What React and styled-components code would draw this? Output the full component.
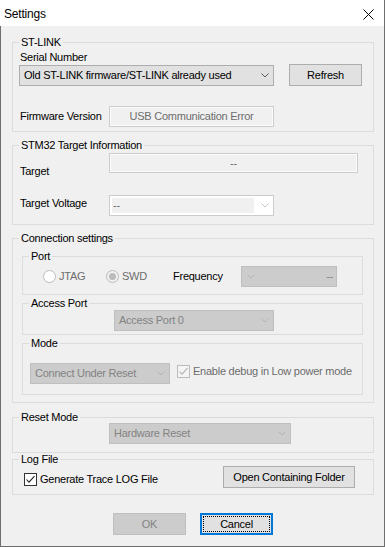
import React from 'react';
import styled, { createGlobalStyle } from 'styled-components';

const GlobalStyle = createGlobalStyle`
  * { box-sizing: border-box; }
  html, body { margin: 0; padding: 0; background: #f0f0f0; }
  body {
    font-family: "Liberation Sans", Arial, sans-serif;
    font-size: 11px;
    line-height: 13px;
    letter-spacing: -0.25px;
    color: #000;
  }
  #root { width: 385px; height: 547px; }
`;

const Window = styled.div`
  width: 385px;
  height: 547px;
  display: flex;
  flex-direction: column;
  background: #f0f0f0;
  border-right: 1px solid #6f6f6f;
  border-bottom: 1px solid #6f6f6f;
`;

const TitleBar = styled.div`
  flex: none;
  height: 26px;
  background: #fff;
  display: flex;
  align-items: center;
  justify-content: space-between;
  padding: 0 10px 0 4px;
`;

const Title = styled.span`
  font-size: 12px;
  line-height: 14px;
  letter-spacing: -0.2px;
  margin-top: 2px;
`;

const CloseIcon = styled.svg`
  display: block;
  margin-top: 3px;
`;

const Body = styled.div`
  flex: 1;
  display: flex;
  flex-direction: column;
  border-left: 1px solid #6f6f6f;
  padding: 0 10px 0 11px;
`;

const Group = styled.fieldset`
  flex: none;
  min-width: 0;
  margin: ${p => p.$mt || 0}px 0 0 ${p => p.$ml || 0}px;
  width: ${p => (p.$w ? `${p.$w}px` : 'auto')};
  height: ${p => p.$h}px;
  padding: 0;
  border: 1px solid #dcdcdc;
`;

const Legend = styled.legend`
  margin-left: 6px;
  padding: 0 2px;
  line-height: 13px;
  white-space: nowrap;
`;

const Section = styled.div`
  padding: ${p => p.$pt || 0}px ${p => p.$pr || 0}px 0 ${p => p.$pl || 0}px;
`;

const Row = styled.div`
  display: flex;
  align-items: ${p => p.$align || 'center'};
  justify-content: ${p => p.$justify || 'flex-start'};
  margin-top: ${p => p.$mt || 0}px;
  padding-left: ${p => p.$pl || 0}px;
  padding-right: ${p => p.$pr || 0}px;
`;

const FieldLabel = styled.span`
  flex: none;
  width: ${p => (p.$w ? `${p.$w}px` : 'auto')};
  margin-top: ${p => p.$mt || 0}px;
  padding-left: 1px;
  white-space: nowrap;
  color: #000;
`;

const Combo = styled.div`
  flex: none;
  width: ${p => p.$w}px;
  height: 21px;
  margin: ${p => p.$mt || 0}px 0 0 ${p => p.$ml || 0}px;
  display: flex;
  flex-direction: ${p => (p.$rtl ? 'row-reverse' : 'row')};
  align-items: center;
  justify-content: space-between;
  padding: ${p => (p.$rtl ? '0 3px 0 5px' : '0 4px 0 4px')};
  border: 1px solid ${p => (p.$disabled ? '#bfbfbf' : '#adadad')};
  background: ${p => (p.$disabled ? '#cccccc' : '#e1e1e1')};
  color: ${p => (p.$disabled ? '#838383' : '#000')};
  white-space: nowrap;
`;

const EditCombo = styled.div`
  flex: none;
  width: ${p => p.$w}px;
  height: 21px;
  display: flex;
  align-items: stretch;
  padding: 2px 0 2px 2px;
  border: 1px solid #cccccc;
  background: #fff;
`;

const EditField = styled.div`
  flex: 1;
  display: flex;
  align-items: center;
  padding-left: 1px;
  background: #f0f0f0;
  color: #6d6d6d;
`;

const DropZone = styled.div`
  flex: none;
  width: 19px;
  display: flex;
  align-items: center;
  justify-content: flex-end;
  padding-right: 4px;
`;

const ReadOnlyBox = styled.div`
  flex: none;
  width: ${p => p.$w}px;
  height: ${p => p.$h}px;
  display: flex;
  align-items: center;
  justify-content: center;
  border: 1px solid #cccccc;
  box-shadow: inset 0 0 0 1px #fbfbfb;
  background: #f0f0f0;
  color: #6d6d6d;
  white-space: nowrap;
`;

const Button = styled.button`
  flex: none;
  width: ${p => p.$w}px;
  height: 22px;
  margin-left: ${p => p.$ml || 0}px;
  padding: 0;
  font: inherit;
  letter-spacing: inherit;
  line-height: 13px;
  color: #000;
  background: #e1e1e1;
  border: 1px solid #adadad;
  border-radius: 0;
  white-space: nowrap;
  &:disabled {
    color: #838383;
    background: #cccccc;
    border-color: #bfbfbf;
  }
  ${p =>
    p.$default &&
    `
    border: 2px solid #0078d7;
    outline: 1px dotted #000;
    outline-offset: -4px;
  `}
`;

const ButtonBar = styled.div`
  display: flex;
  justify-content: center;
  gap: 14px;
  margin-top: 18px;
`;

const PortGrid = styled.div`
  display: grid;
  grid-template-columns: 63px 66px 69px 96px;
  align-items: center;
  height: 21px;
  margin-top: 3px;
  padding-left: 20px;
`;

const RadioItem = styled.label`
  display: flex;
  align-items: center;
  gap: 3px;
  color: #6d6d6d;
`;

const RadioCircle = styled.span`
  flex: none;
  width: 13px;
  height: 13px;
  border-radius: 50%;
  border: 1px solid #bcbcbc;
  background: ${p => (p.$checked ? '#f0f0f0' : '#fff')};
  display: flex;
  align-items: center;
  justify-content: center;
  &::after {
    content: '';
    display: ${p => (p.$checked ? 'block' : 'none')};
    width: 7px;
    height: 7px;
    border-radius: 50%;
    background: #bcbcbc;
  }
`;

const CheckItem = styled.label`
  flex: none;
  display: flex;
  align-items: center;
  gap: 3px;
  margin: ${p => p.$mt || 0}px 0 0 ${p => p.$ml || 0}px;
  color: ${p => (p.$disabled ? '#6d6d6d' : '#000')};
  white-space: nowrap;
`;

const CheckBox = styled.span`
  flex: none;
  width: 13px;
  height: 13px;
  display: flex;
  align-items: center;
  justify-content: center;
  border: 1px solid ${p => (p.$disabled ? '#bcbcbc' : '#333333')};
  background: ${p => (p.$disabled ? '#f4f4f4' : '#fff')};
`;

const IconSvg = styled.svg`
  flex: none;
  display: block;
`;

const Chevron = ({ color = '#606060' }) => (
  <IconSvg width="8" height="5" viewBox="0 0 8 5">
    <polyline points="0.5,0.5 4,4 7.5,0.5" fill="none" stroke={color} strokeWidth="1" />
  </IconSvg>
);

const Check = ({ color }) => (
  <IconSvg width="11" height="11" viewBox="0 0 11 11">
    <polyline points="1.5,5.5 4,8.2 9.5,2.2" fill="none" stroke={color} strokeWidth="1.1" />
  </IconSvg>
);

export default function App() {
  return (
    <>
      <GlobalStyle />
      <Window>
        <TitleBar>
          <Title>Settings</Title>
          <CloseIcon width="11" height="11" viewBox="0 0 11 11">
            <line x1="0.5" y1="0.5" x2="10.5" y2="10.5" stroke="#000" strokeWidth="1" />
            <line x1="10.5" y1="0.5" x2="0.5" y2="10.5" stroke="#000" strokeWidth="1" />
          </CloseIcon>
        </TitleBar>
        <Body>
          <Group $mt={10} $h={96}>
            <Legend>ST-LINK</Legend>
            <Section $pt={2} $pl={6}>
              <FieldLabel>Serial Number</FieldLabel>
              <Row $align="flex-start">
                <Combo $w={255} $mt={1}>
                  <span>Old ST-LINK firmware/ST-LINK already used</span>
                  <Chevron color="#5a5a5a" />
                </Combo>
                <Button $w={73} $ml={15}>Refresh</Button>
              </Row>
              <Row $mt={20}>
                <FieldLabel $w={90}>Firmware Version</FieldLabel>
                <ReadOnlyBox $w={165} $h={21}>USB Communication Error</ReadOnlyBox>
              </Row>
            </Section>
          </Group>

          <Group $mt={7} $h={86}>
            <Legend>STM32 Target Information</Legend>
            <Section $pt={1} $pl={6}>
              <Row $align="flex-start">
                <FieldLabel $w={90} $mt={12}>Target</FieldLabel>
                <ReadOnlyBox $w={249} $h={20}>--</ReadOnlyBox>
              </Row>
              <Row $align="flex-start" $mt={17}>
                <FieldLabel $w={90} $mt={2}>Target Voltage</FieldLabel>
                <EditCombo $w={165}>
                  <EditField>--</EditField>
                  <DropZone>
                    <Chevron color="#c4c4c4" />
                  </DropZone>
                </EditCombo>
              </Row>
            </Section>
          </Group>

          <Group $mt={7} $h={171}>
            <Legend>Connection settings</Legend>
            <Group $mt={5} $ml={9} $w={341} $h={45}>
              <Legend>Port</Legend>
              <PortGrid>
                <RadioItem>
                  <RadioCircle />
                  <span>JTAG</span>
                </RadioItem>
                <RadioItem>
                  <RadioCircle $checked />
                  <span>SWD</span>
                </RadioItem>
                <FieldLabel>Frequency</FieldLabel>
                <Combo $w={96} $disabled $rtl>
                  <span>--</span>
                  <Chevron color="#b4b4b4" />
                </Combo>
              </PortGrid>
            </Group>
            <Group $mt={2} $ml={9} $w={341} $h={38}>
              <Legend>Access Port</Legend>
              <Combo $w={160} $ml={91} $disabled>
                <span>Access Port 0</span>
                <Chevron color="#b4b4b4" />
              </Combo>
            </Group>
            <Group $mt={2} $ml={9} $w={341} $h={58}>
              <Legend>Mode</Legend>
              <Row $align="flex-start" $mt={13} $pl={7}>
                <Combo $w={140} $disabled>
                  <span>Connect Under Reset</span>
                  <Chevron color="#b4b4b4" />
                </Combo>
                <CheckItem $disabled $ml={7} $mt={2}>
                  <CheckBox $disabled>
                    <Check color="#b0b0b0" />
                  </CheckBox>
                  <span>Enable debug in Low power mode</span>
                </CheckItem>
              </Row>
            </Group>
          </Group>

          <Group $mt={8} $h={42}>
            <Legend>Reset Mode</Legend>
            <Combo $w={182} $ml={96} $mt={-1} $disabled>
              <span>Hardware Reset</span>
              <Chevron color="#b4b4b4" />
            </Combo>
          </Group>

          <Group $h={42}>
            <Legend>Log File</Legend>
            <Row $align="flex-start" $justify="space-between" $pl={11} $pr={18}>
              <CheckItem $mt={7}>
                <CheckBox>
                  <Check color="#222" />
                </CheckBox>
                <span>Generate Trace LOG File</span>
              </CheckItem>
              <Button $w={132}>Open Containing Folder</Button>
            </Row>
          </Group>

          <ButtonBar>
            <Button $w={73} disabled>OK</Button>
            <Button $w={73} $default>Cancel</Button>
          </ButtonBar>
        </Body>
      </Window>
    </>
  );
}
